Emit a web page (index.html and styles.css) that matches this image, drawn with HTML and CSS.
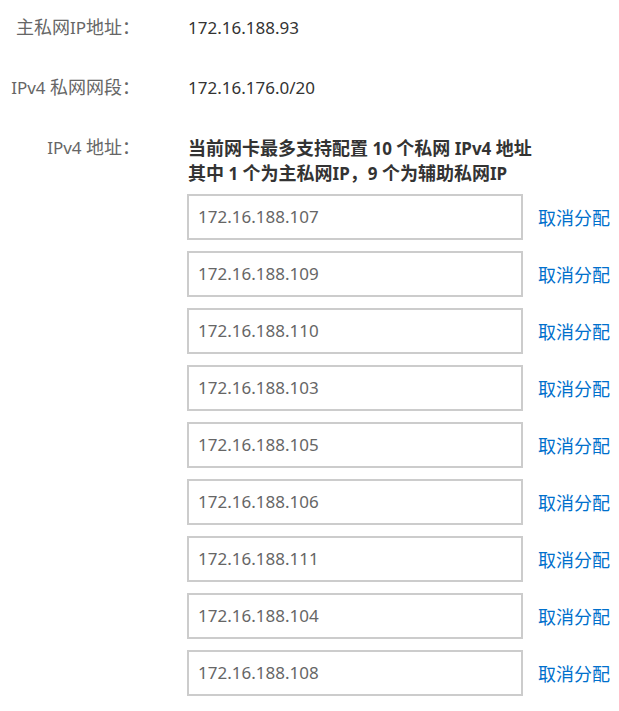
FILE: index.html
```html
<!DOCTYPE html>
<html lang="zh-CN">
<head>
<meta charset="utf-8">
<link rel="stylesheet" href="styles.css">
</head>
<body>
<div class="form">
  <div class="form-item">
    <div class="label"><span class="zh">主私网</span>IP<span class="zh">地址：</span></div>
    <div class="content value">172.16.188.93</div>
  </div>
  <div class="form-item">
    <div class="label">IPv4 <span class="zh">私网网段：</span></div>
    <div class="content value">172.16.176.0/20</div>
  </div>
  <div class="form-item">
    <div class="label">IPv4 <span class="zh">地址：</span></div>
    <div class="content">
      <div class="tip"><span class="zh">当前网卡最多支持配置</span> 10 <span class="zh">个私网</span> IPv4 <span class="zh">地址</span><br><span class="zh">其中</span> 1 <span class="zh">个为主私网</span>IP<span class="zh">，</span>9 <span class="zh">个为辅助私网</span>IP</div>
      <ul class="ip-list">
        <li class="ip-row"><span class="ip-input">172.16.188.107</span><a class="link zh">取消分配</a></li>
        <li class="ip-row"><span class="ip-input">172.16.188.109</span><a class="link zh">取消分配</a></li>
        <li class="ip-row"><span class="ip-input">172.16.188.110</span><a class="link zh">取消分配</a></li>
        <li class="ip-row"><span class="ip-input">172.16.188.103</span><a class="link zh">取消分配</a></li>
        <li class="ip-row"><span class="ip-input">172.16.188.105</span><a class="link zh">取消分配</a></li>
        <li class="ip-row"><span class="ip-input">172.16.188.106</span><a class="link zh">取消分配</a></li>
        <li class="ip-row"><span class="ip-input">172.16.188.111</span><a class="link zh">取消分配</a></li>
        <li class="ip-row"><span class="ip-input">172.16.188.104</span><a class="link zh">取消分配</a></li>
        <li class="ip-row"><span class="ip-input">172.16.188.108</span><a class="link zh">取消分配</a></li>
      </ul>
    </div>
  </div>
</div>
</body>
</html>
```
FILE: styles.css
```css
html, body {
  margin: 0;
  padding: 0;
  background: #fff;
}
body {
  font-family: "Noto Sans", "Noto Sans CJK SC", sans-serif;
  font-size: 17px;
  line-height: 24px;
  color: #333;
}
.zh {
  font-family: "Noto Sans CJK SC", sans-serif;
  font-size: 18px;
  line-height: 1;
}
.form {
  padding-top: 16px;
}
.form-item {
  display: flex;
  margin-bottom: 36px;
}
.label {
  width: 140px;
  flex: none;
  text-align: right;
  color: #666;
}
.content {
  margin-left: 47px;
}
.value {
  margin-left: 48px;
}
.tip {
  font-weight: bold;
  color: #333;
  margin-left: 1px;
  line-height: 25px;
}
.ip-list {
  list-style: none;
  margin: 8px 0 0 0;
  padding: 0;
  display: flex;
  flex-direction: column;
  gap: 11px;
}
.ip-row {
  display: flex;
  align-items: center;
  gap: 15px;
}
.ip-input {
  box-sizing: border-box;
  width: 336px;
  height: 46px;
  border: 2px solid #cccccc;
  padding: 0 9px;
  display: flex;
  align-items: center;
  color: #666;
}
.link {
  color: #0070cc;
  cursor: pointer;
}
```
